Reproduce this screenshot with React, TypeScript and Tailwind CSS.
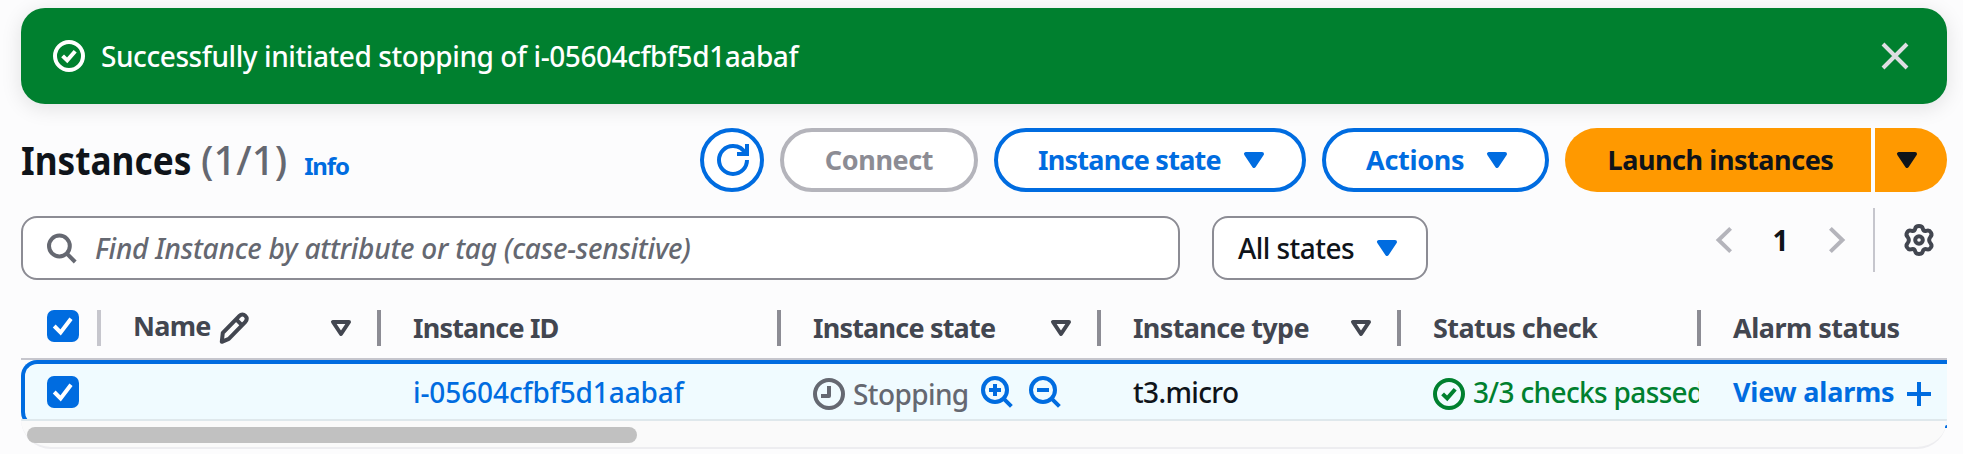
import type { ReactNode } from "react";

function Icon({ children, className = "" }: { children: ReactNode; className?: string }) {
  return (
    <svg
      viewBox="0 0 16 16"
      className={`block size-8 shrink-0 overflow-visible ${className}`}
      fill="none"
      stroke="currentColor"
      strokeWidth="2"
      strokeLinejoin="round"
    >
      {children}
    </svg>
  );
}

function Caret({ filled = true, className = "" }: { filled?: boolean; className?: string }) {
  return (
    <Icon className={className}>
      <path d="M4 5h8l-4 6-4-6Z" fill={filled ? "currentColor" : "none"} />
    </Icon>
  );
}

function CheckCircle({ className = "" }: { className?: string }) {
  return (
    <Icon className={className}>
      <circle cx="8" cy="8" r="7" />
      <path d="m4.8 7.9 2.3 2.3 4-4.6" strokeLinejoin="miter" />
    </Icon>
  );
}

function Checkbox() {
  return (
    <span className="flex size-8 shrink-0 rounded-[7px] bg-[#006ce0] text-white">
      <Icon>
        <path d="m3.6 8 3.2 3.2 5.2-6.8" strokeLinejoin="miter" />
      </Icon>
    </span>
  );
}

function HeaderCell({ label, width, tracking, sortable = false, last = false }: { label: string; width: string; tracking: string; sortable?: boolean; last?: boolean }) {
  return (
    <div className={`flex h-9 items-center border-[#8c8c94] pl-8 ${last ? "" : "border-r-4"} ${width}`}>
      <span className={tracking}>{label}</span>
      {sortable && <Caret filled={false} className="ml-auto mr-5" />}
    </div>
  );
}

export default function App() {
  return (
    <div className="flex h-[454px] w-[1963px] flex-col overflow-hidden bg-[#fcfcfd] pt-2 pr-4 pl-[21px] font-['Noto_Sans',sans-serif] text-[28px] leading-8 font-medium whitespace-nowrap text-[#0f141a]">
      <div className="flex h-24 shrink-0 items-center rounded-[24px] bg-[#00802f] pr-9 pl-8 text-white shadow-[0_4px_20px_1px_rgba(0,7,22,0.10)]">
        <CheckCircle />
        <span className="ml-4 tracking-[-0.42px]">Successfully initiated stopping of i-05604cfbf5d1aabaf</span>
        <Icon className="ml-auto text-[#dedee3]">
          <path d="m2 2 12 12M14 2 2 14" />
        </Icon>
      </div>

      <div className="mt-6 flex h-16 shrink-0 items-center gap-4 text-[27px] font-bold">
        <h1 className="mr-auto flex items-baseline text-[40px] leading-[50px]">
          <span className="inline-block w-[180px] origin-left scale-x-[0.88] font-bold">Instances</span>
          <span className="font-medium text-[#656871]">(1/1)</span>
          <a className="ml-[17px] text-2xl font-bold tracking-[-1.1px] text-[#006ce0]">Info</a>
        </h1>
        <button className="flex size-16 items-center justify-center rounded-full border-4 border-[#006ce0] bg-white pl-0.5 text-[#006ce0]">
          <Icon>
            <path d="M10 5h5V0" strokeLinejoin="miter" />
            <path d="M15 8a6.957 6.957 0 0 1-7 7 6.957 6.957 0 0 1-7-7 6.957 6.957 0 0 1 7-7 6.87 6.87 0 0 1 6.3 4" />
          </Icon>
        </button>
        <button className="h-16 w-[198px] rounded-full border-4 border-[#b4b4bb] bg-white tracking-[-0.4px] text-[#8c8c94]">Connect</button>
        <button className="flex h-16 w-[312px] items-center justify-between rounded-full border-4 border-[#006ce0] bg-white pr-8 pl-10 tracking-[-0.75px] text-[#006ce0]">
          Instance state
          <Caret />
        </button>
        <button className="flex h-16 w-[227px] items-center justify-between rounded-full border-4 border-[#006ce0] bg-white pr-8 pl-10 tracking-[-0.3px] text-[#006ce0]">
          Actions
          <Caret />
        </button>
        <div className="flex gap-1">
          <button className="h-16 w-[306px] rounded-l-full bg-[#ff9900] pl-[5px] tracking-[-0.45px]">Launch instances</button>
          <button className="flex h-16 w-[72px] items-center rounded-r-full bg-[#ff9900] pl-4">
            <Caret />
          </button>
        </div>
      </div>

      <div className="mt-4 flex h-16 shrink-0">
        <div className="mt-2 flex h-16 w-[1159px] items-center rounded-2xl border-2 border-[#8c8c94] bg-white pl-[22px] text-[#656871]">
          <Icon>
            <circle cx="7.2" cy="7" r="5.2" />
            <path d="m10.7 10.6 4.4 4.4" />
          </Icon>
          <span className="ml-[18px] tracking-[-0.24px] italic">Find Instance by attribute or tag (case-sensitive)</span>
        </div>
        <div className="mt-2 ml-8 flex h-16 w-[216px] items-center justify-between rounded-2xl border-2 border-[#8c8c94] bg-white pr-[23px] pl-6">
          <span className="tracking-[-0.55px]">All states</span>
          <Caret className="text-[#006ce0]" />
        </div>
        <div className="ml-auto flex h-16 items-center pr-3">
          <Icon className="text-[#b4b4bb]">
            <path d="M11.3 2.2 5.3 8l6 5.8" strokeLinejoin="miter" />
          </Icon>
          <span className="w-[81px] text-center font-bold">1</span>
          <Icon className="text-[#b4b4bb]">
            <path d="m4.7 2.2 6 5.8-6 5.8" strokeLinejoin="miter" />
          </Icon>
          <div className="mr-7 ml-5 h-16 w-0.5 bg-[#c6c6cd]" />
          <Icon className="text-[#424650]">
            <circle cx="8" cy="8" r="1.9" />
            <path d="M6.1 2.3C6.3 1.4 7 1 8 1s1.7.4 1.9 1.3c.2.9.9 1.3 1.8 1.1 1-.3 1.8 0 2.3.9s.3 1.6-.4 2.300c-.7.8-.7 2 0 2.800.7.700.9 1.400.4 2.300s-1.300 1.200-2.300.9c-.9-.2-1.600.2-1.800 1.100C9.700 14.600 9 15 8 15s-1.700-.4-1.900-1.300c-.2-.9-.9-1.300-1.800-1.100-1 .3-1.800 0-2.300-.9s-.3-1.600.4-2.300c.7-.8.7-2 0-2.800-.7-.7-.9-1.400-.4-2.300s1.300-1.200 2.300-.9c.9.2 1.600-.2 1.800-1.100Z" />
          </Icon>
        </div>
      </div>

      <div className="mt-[38px] flex h-12 shrink-0 text-[27px] font-bold text-[#424650]">
        <div className="flex h-9 w-20 shrink-0 border-r-4 border-[#c6c6cd] pl-[26px]">
          <Checkbox />
        </div>
        <div className="flex h-9 w-[280px] shrink-0 items-center border-r-4 border-[#8c8c94] pl-8">
          <span className="relative top-[-2px] tracking-[-0.7px]">Name</span>
          <Icon className="ml-[7px]">
            <path d="m1.900 14.900.5-4.500 8.300-8.500c.9-.9 2.100-.9 3 0s.9 2.100 0 3L5.400 13.400l-3.500 1.500Z" />
            <path d="m9.200 3.800 3 3" />
          </Icon>
          <Caret filled={false} className="mr-5 ml-auto" />
        </div>
        <HeaderCell label="Instance ID" width="w-[400px]" tracking="tracking-[-0.8px]" />
        <HeaderCell label="Instance state" width="w-[320px]" tracking="tracking-[-0.8px]" sortable />
        <HeaderCell label="Instance type" width="w-[300px]" tracking="tracking-[-0.65px]" sortable />
        <HeaderCell label="Status check" width="w-[300px]" tracking="tracking-[-0.55px]" />
        <HeaderCell label="Alarm status" width="w-[246px]" tracking="tracking-[-0.5px]" last />
      </div>

      <div className="h-[61px] shrink-0 overflow-hidden border-t-2 border-[#c6c6cd]">
        <div className="flex h-[68px] items-start rounded-l-2xl border-y-4 border-l-4 border-[#006ce0] bg-[#f0fbff] pt-3">
          <div className="flex w-[76px] shrink-0 pl-[22px]">
            <Checkbox />
          </div>
          <div className="w-[280px] shrink-0" />
          <a className="w-[400px] shrink-0 pl-8 tracking-[-0.1px] text-[#006ce0]">i-05604cfbf5d1aabaf</a>
          <div className="flex w-[320px] shrink-0 pl-8 text-[#656871]">
            <Icon className="mt-0.5">
              <circle cx="8" cy="8" r="7" />
              <path d="M8 4v5H4" />
            </Icon>
            <span className="mt-0.5 ml-2 w-[128px] tracking-[-0.6px]">Stopping</span>
            <Icon className="text-[#006ce0]">
              <circle cx="7" cy="7" r="6" />
              <path d="m11.300 11.300 3.900 3.900M4 7h6M7 4v6" />
            </Icon>
            <Icon className="ml-4 text-[#006ce0]">
              <circle cx="7" cy="7" r="6" />
              <path d="m11.300 11.300 3.900 3.900M4 7h6" />
            </Icon>
          </div>
          <span className="w-[300px] shrink-0 pl-8 tracking-[-0.65px]">t3.micro</span>
          <div className="flex w-[298px] shrink-0 overflow-hidden pl-8 text-[#00802f]">
            <CheckCircle className="mt-0.5" />
            <span className="ml-2 tracking-[-0.65px]">3/3 checks passed</span>
          </div>
          <a className="flex w-[236px] shrink-0 justify-between pl-[34px] text-[27px] font-bold tracking-[-0.2px] text-[#006ce0]">
            View alarms
            <Icon className="mt-0.5">
              <path d="M8 2v12M2 8h12" />
            </Icon>
          </a>
        </div>
      </div>
      <div className="relative h-[30px] shrink-0 rounded-b-[32px] border-t-2 border-b-2 border-t-[#dfe8ec] border-b-[#ededf0] bg-[#fafafa] pt-1.5 pl-1.5">
        <div className="h-4 w-[610px] rounded-full bg-[#c1c1c1]" />
        <div className="absolute top-1 right-0 h-[3px] w-0.5 rounded-tl-sm bg-[#006ce0]" />
      </div>
    </div>
  );
}
